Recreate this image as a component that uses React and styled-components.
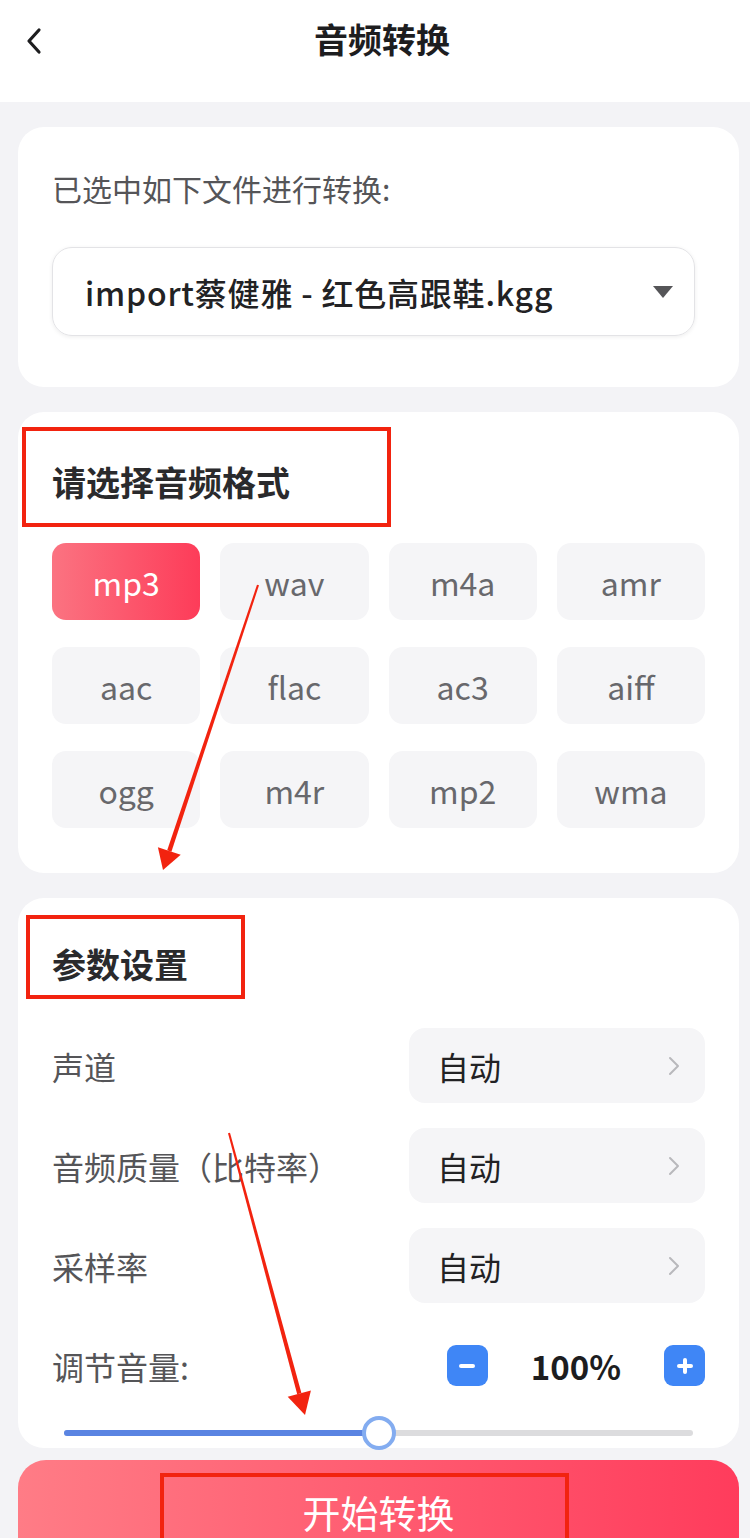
import React, { useState } from "react";
import styled, { createGlobalStyle } from "styled-components";

const GlobalStyle = createGlobalStyle`
  html, body {
    margin: 0;
    padding: 0;
    background: #f3f3f6;
    font-family: "Noto Sans CJK SC", "Noto Sans", sans-serif;
  }
`;

const Page = styled.div`
  position: relative;
  width: 750px;
  height: 1538px;
  background: #f3f3f6;
  overflow: hidden;
`;

const Header = styled.header`
  height: 102px;
  background: #ffffff;
  display: flex;
  align-items: flex-start;
  justify-content: center;
  position: relative;
`;

const BackButton = styled.div`
  position: absolute;
  left: 22px;
  top: 26px;
  width: 24px;
  height: 30px;
  display: flex;
  align-items: center;
  justify-content: center;
`;

const Title = styled.h1`
  margin: 0;
  margin-top: 17px;
  margin-left: 14px;
  font-size: 34px;
  line-height: 44px;
  font-weight: 700;
  color: #1d1d1f;
`;

const Main = styled.main`
  display: flex;
  flex-direction: column;
  gap: 25px;
  padding: 25px 11px 0 18px;
`;

const Card = styled.section`
  background: #ffffff;
  border-radius: 26px;
  padding: ${(p) => p.$pad || "0 34px"};
`;

const Label = styled.div`
  font-size: 30px;
  line-height: 40px;
  color: #555558;
`;

const Select = styled.div`
  margin-top: 39px;
  margin-right: 10px;
  height: 89px;
  box-sizing: border-box;
  border: 1.5px solid #e3e3e6;
  border-radius: 20px;
  box-shadow: 0 1px 4px rgba(0, 0, 0, 0.07);
  display: flex;
  align-items: center;
  justify-content: space-between;
  padding: 0 20px 0 32px;
  font-size: 32px;
  letter-spacing: 0.8px;
  font-weight: 500;
  color: #222224;
`;

const SectionTitle = styled.h2`
  margin: 0;
  font-size: 34px;
  line-height: 48px;
  font-weight: 700;
  color: #2a2a2c;
`;

const FormatGrid = styled.div`
  margin-top: 37px;
  display: grid;
  grid-template-columns: repeat(4, 1fr);
  column-gap: 20px;
  row-gap: 27px;
`;

const FormatButton = styled.button`
  height: 77px;
  border: none;
  border-radius: 14px;
  font-family: inherit;
  font-size: 32px;
  color: ${(p) => (p.$active ? "#ffffff" : "#68686c")};
  background: ${(p) =>
    p.$active ? "linear-gradient(90deg, #fb7381, #fd3c59)" : "#f5f5f7"};
  cursor: pointer;
  padding: 0;
`;

const ParamList = styled.div`
  margin-top: 40px;
  display: flex;
  flex-direction: column;
  gap: 25px;
`;

const ParamRow = styled.div`
  height: 75px;
  display: flex;
  align-items: center;
  justify-content: space-between;
`;

const ParamLabel = styled.div`
  font-size: 32px;
  color: #555558;
`;

const Pill = styled.div`
  width: 296px;
  height: 75px;
  box-sizing: border-box;
  border-radius: 16px;
  background: #f5f5f7;
  display: flex;
  align-items: center;
  justify-content: space-between;
  padding: 0 25px 0 28px;
  font-size: 32px;
  color: #222224;
`;

const Stepper = styled.div`
  display: flex;
  align-items: center;
  gap: 43px;
`;

const StepButton = styled.button`
  width: 41px;
  height: 41px;
  border: none;
  border-radius: 9px;
  background: #3f86f6;
  padding: 0;
  display: flex;
  align-items: center;
  justify-content: center;
  cursor: pointer;
`;

const Percent = styled.div`
  font-size: 33px;
  font-weight: 700;
  color: #1d1d1f;
`;

const SliderWrap = styled.div`
  position: relative;
  height: 30px;
  margin: 15px 12px 0;
  display: flex;
  align-items: center;
`;

const Track = styled.div`
  width: 100%;
  height: 6px;
  border-radius: 3px;
  background: #dcdcde;
  position: relative;
`;

const Fill = styled.div`
  height: 100%;
  border-radius: 3px;
  background: #5a84e2;
`;

const Thumb = styled.div`
  position: absolute;
  top: 50%;
  width: 34px;
  height: 34px;
  box-sizing: border-box;
  border-radius: 50%;
  border: 4px solid #83acf0;
  background: #ffffff;
  transform: translate(-50%, -50%);
`;

/* the screenshot cuts the button off at the bottom edge */
const StartButton = styled.button`
  margin-top: -13px;
  height: 79px;
  border: none;
  border-radius: 28px 28px 0 0;
  background: linear-gradient(90deg, #ff7c86, #ff3c5c);
  color: #ffffff;
  font-family: inherit;
  font-size: 38px;
  line-height: 42px;
  display: flex;
  justify-content: center;
  align-items: flex-start;
  padding: 31px 0 0;
  box-sizing: border-box;
  cursor: pointer;
`;

const Overlay = styled.svg`
  position: absolute;
  left: 0;
  top: 0;
  pointer-events: none;
`;

const formats = ["mp3", "wav", "m4a", "amr", "aac", "flac", "ac3", "aiff", "ogg", "m4r", "mp2", "wma"];
const params = ["声道", "音频质量（比特率）", "采样率"];

function Chevron() {
  return (
    <svg width="12" height="20" viewBox="0 0 12 20">
      <path d="M2 2 L10 10 L2 18" fill="none" stroke="#b8b8bc" strokeWidth="2" strokeLinecap="round" strokeLinejoin="round" />
    </svg>
  );
}

function App() {
  const [format, setFormat] = useState("mp3");
  const [volume, setVolume] = useState(100);
  const ratio = 0.5;

  return (
    <Page>
      <GlobalStyle />
      <Header>
        <BackButton>
          <svg width="20" height="28" viewBox="0 0 20 28">
            <path d="M15 3 L5 14 L15 25" fill="none" stroke="#1d1d1f" strokeWidth="3.2" strokeLinecap="round" strokeLinejoin="round" />
          </svg>
        </BackButton>
        <Title>音频转换</Title>
      </Header>

      <Main>
        <Card $pad="41px 34px 51px">
          <Label>已选中如下文件进行转换:</Label>
          <Select>
            <span>import蔡健雅 - 红色高跟鞋.kgg</span>
            <svg width="22" height="14" viewBox="0 0 22 14">
              <path d="M1 1 H21 L11 13 Z" fill="#555558" strokeLinejoin="round" />
            </svg>
          </Select>
        </Card>

        <Card $pad="46px 34px 45px">
          <SectionTitle>请选择音频格式</SectionTitle>
          <FormatGrid>
            {formats.map((f) => (
              <FormatButton key={f} $active={f === format} onClick={() => setFormat(f)}>
                {f}
              </FormatButton>
            ))}
          </FormatGrid>
        </Card>

        <Card $pad="42px 34px 0">
          <SectionTitle>参数设置</SectionTitle>
          <ParamList>
            {params.map((p) => (
              <ParamRow key={p}>
                <ParamLabel>{p}</ParamLabel>
                <Pill>
                  <span>自动</span>
                  <Chevron />
                </Pill>
              </ParamRow>
            ))}
            <ParamRow>
              <ParamLabel>调节音量:</ParamLabel>
              <Stepper>
                <StepButton onClick={() => setVolume(Math.max(0, volume - 10))}>
                  <svg width="18" height="18" viewBox="0 0 18 18">
                    <rect x="1" y="7" width="16" height="4" rx="2" fill="#fff" />
                  </svg>
                </StepButton>
                <Percent>{volume}%</Percent>
                <StepButton onClick={() => setVolume(Math.min(200, volume + 10))}>
                  <svg width="18" height="18" viewBox="0 0 18 18">
                    <rect x="1" y="7" width="16" height="4" rx="2" fill="#fff" />
                    <rect x="7" y="1" width="4" height="16" rx="2" fill="#fff" />
                  </svg>
                </StepButton>
              </Stepper>
            </ParamRow>
          </ParamList>
          <SliderWrap>
            <Track>
              <Fill style={{ width: `${ratio * 100}%` }} />
            </Track>
            <Thumb style={{ left: `${ratio * 100}%` }} />
          </SliderWrap>
        </Card>

        <StartButton>开始转换</StartButton>
      </Main>

      {/* hand-drawn annotations on top of the screenshot */}
      <Overlay width="750" height="1538" viewBox="0 0 750 1538">
        <g fill="none" stroke="#f2230f" strokeWidth="4">
          <rect x="24" y="429" width="365" height="96" />
          <rect x="28" y="917" width="215" height="80" />
          <rect x="162" y="1475" width="405" height="100" />
        </g>
        <g fill="#f2230f">
          <polygon points="259,585.3 257,584.7 167.2,850.3 171.4,851.7" />
          <polygon points="163,870 157.9,847.2 180.7,854.8" />
          <polygon points="230,1132.7 228,1133.3 297.2,1394.3 301.4,1393.1" />
          <polygon points="305,1415 287.7,1396.8 310.9,1390.6" />
        </g>
      </Overlay>
    </Page>
  );
}

export default App;
